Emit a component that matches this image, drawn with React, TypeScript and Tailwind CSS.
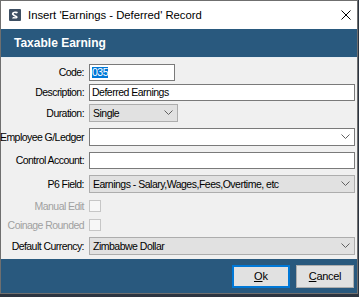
import React from 'react'

const font = { fontFamily: '"Liberation Sans", Arial, sans-serif' }

function Chevron() {
  return (
    <svg width="9" height="6" viewBox="0 0 9 6" className="shrink-0">
      <path d="M0.5 0.5 L4.5 4.5 L8.5 0.5" fill="none" stroke="#606060" strokeWidth="1" />
    </svg>
  )
}

function Label({ text, disabled }: { text: string; disabled?: boolean }) {
  return (
    <div
      className={`w-[83px] shrink-0 flex justify-end whitespace-nowrap text-[10.5px] tracking-[-0.55px] leading-none ${
        disabled ? 'text-[#a0a0a0]' : 'text-black'
      }`}
    >
      {text}
    </div>
  )
}

function TextBox({ value, w, selected }: { value?: string; w: string; selected?: boolean }) {
  return (
    <div className={`${w} h-[17px] border border-[#7a7a7a] bg-white flex items-center px-[2px] text-[10.5px] tracking-[-0.5px] leading-none`}>
      {selected ? <span className="bg-[#0078d7] text-white">{value}</span> : <span>{value}</span>}
    </div>
  )
}

function Select({ value, w, white }: { value?: string; w: string; white?: boolean }) {
  return (
    <div
      className={`${w} h-[18px] border flex items-center justify-between pl-[3px] pr-[4px] text-[10.5px] tracking-[-0.5px] leading-none ${
        white ? 'bg-white border-[#7a7a7a]' : 'bg-[#e1e1e1] border-[#adadad]'
      }`}
    >
      <span className="whitespace-nowrap">{value}</span>
      <Chevron />
    </div>
  )
}

function Row({ label, disabled, mt, children }: { label: string; disabled?: boolean; mt: string; children: React.ReactNode }) {
  return (
    <div className={`flex items-center gap-[5px] ${mt}`}>
      <Label text={label} disabled={disabled} />
      {children}
    </div>
  )
}

function Checkbox() {
  return <div className="w-[12px] h-[12px] border border-[#c6c6c6] bg-[#f7f7f7]" />
}

export default function App() {
  return (
    <div className="w-[359px] h-[297px] bg-[#2c3440] overflow-hidden" style={font}>
      <div className="w-[358px] h-[294px] border border-[#6f6f6f] bg-[#f0f0f0] flex flex-col">
        {/* title bar */}
        <div className="h-[28px] bg-white flex items-center pl-[8px] pr-[6px] shrink-0">
          <svg width="12" height="12" viewBox="0 0 12 12" className="shrink-0">
            <rect x="0" y="0" width="12" height="12" rx="1" fill="#3d4f63" />
            <path d="M3 4 Q4 2 7 2.5 L9 3 L8 4.5 L5 4 Q4 5 6 6 L8 7 Q9.5 8.5 7.5 9.5 L3 9.5 L4 8 L7 8.2 L4.5 7 Q2 5.5 3 4 Z" fill="#ffffff" />
          </svg>
          <span className="ml-[7px] text-[11.3px] text-black whitespace-nowrap">Insert 'Earnings - Deferred' Record</span>
          <div className="flex-1" />
          <svg width="10" height="10" viewBox="0 0 10 10">
            <path d="M0.5 0.5 L9.5 9.5 M9.5 0.5 L0.5 9.5" stroke="#000" strokeWidth="1" />
          </svg>
        </div>
        {/* header */}
        <div className="h-[29px] bg-[#29597e] flex items-center pl-[13px] shrink-0 border-b border-[#e8eef3]">
          <span className="text-white font-bold text-[12px]">Taxable Earning</span>
        </div>
        {/* body */}
        <div className="flex-1 flex flex-col pt-[6px]">
          <Row label="Code:" mt="mt-0">
            <TextBox value="035" w="w-[86px]" selected />
          </Row>
          <Row label="Description:" mt="mt-[3px]">
            <TextBox value="Deferred Earnings" w="w-[266px]" />
          </Row>
          <Row label="Duration:" mt="mt-[3px]">
            <Select value="Single" w="w-[89px]" />
          </Row>
          <Row label="Employee G/Ledger" mt="mt-[6px]">
            <Select w="w-[266px]" white />
          </Row>
          <Row label="Control Account:" mt="mt-[6px]">
            <TextBox w="w-[266px]" />
          </Row>
          <Row label="P6 Field:" mt="mt-[6px]">
            <Select value="Earnings - Salary,Wages,Fees,Overtime, etc" w="w-[266px]" />
          </Row>
          <Row label="Manual Edit" disabled mt="mt-[7px]">
            <Checkbox />
          </Row>
          <Row label="Coinage Rounded" disabled mt="mt-[7px]">
            <Checkbox />
          </Row>
          <Row label="Default Currency:" mt="mt-[6px]">
            <Select value="Zimbabwe Dollar" w="w-[266px]" />
          </Row>
        </div>
        {/* footer */}
        <div className="h-[34px] bg-[#29597e] flex items-center justify-end gap-[6px] pr-[3px] shrink-0">
          <div className="w-[58px] h-[23px] bg-[#e1e1e1] border-2 border-[#0078d7] flex items-center justify-center text-[11px] text-black">
            <span><span className="underline">O</span>k</span>
          </div>
          <div className="w-[58px] h-[23px] bg-[#e1e1e1] border border-[#adadad] flex items-center justify-center text-[11px] tracking-[-0.3px] text-black">
            <span><span className="underline">C</span>ancel</span>
          </div>
        </div>
      </div>
    </div>
  )
}
